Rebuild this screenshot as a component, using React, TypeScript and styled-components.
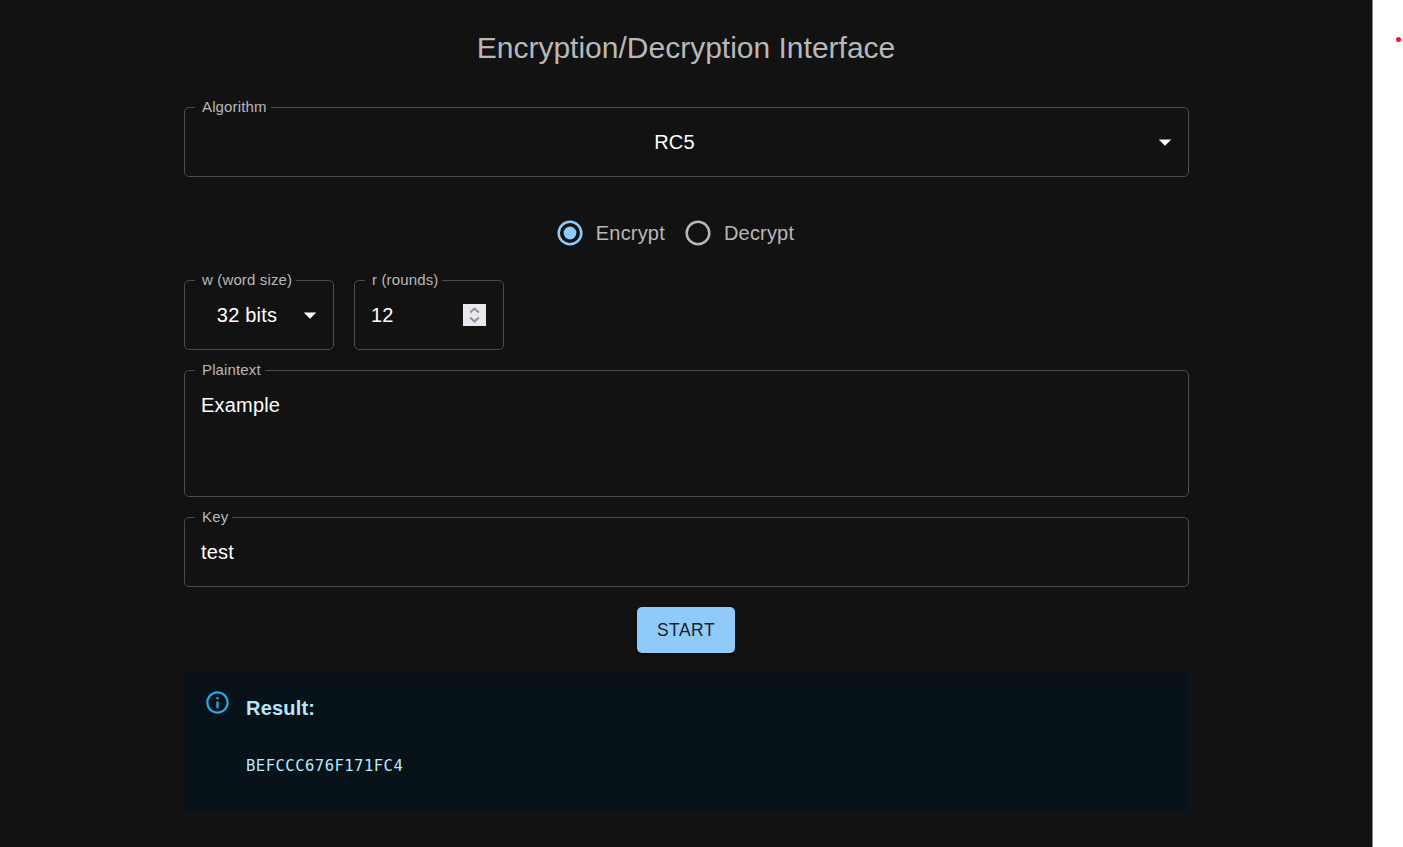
import React from "react";
import styled, { createGlobalStyle } from "styled-components";

const GlobalStyle = createGlobalStyle`
  * { box-sizing: border-box; }
  body {
    margin: 0;
    background: #fff;
    font-family: "Liberation Sans", Arial, sans-serif;
    overflow: hidden;
  }
`;

const Page = styled.div`
  display: flex;
  height: 847px;
`;

const Main = styled.main`
  width: 1373px;
  padding: 29px 183px 0 184px;
  background: #121212;
  border-right: 1px solid #8a8a8a;
`;

const Margin = styled.aside`
  flex: 1;
  display: flex;
  justify-content: flex-end;
  padding: 37px 2px 0 0;
`;

const Dot = styled.span`
  width: 5px;
  height: 5px;
  border-radius: 50%;
  background: #ed1c24;
`;

const Title = styled.h1`
  margin: 0 1px 41px 0;
  font-size: 30px;
  line-height: 37px;
  font-weight: 400;
  text-align: center;
  color: #b8b8b8;
`;

const Field = styled.div<{ $width?: number; $height?: number }>`
  position: relative;
  display: flex;
  align-items: flex-start;
  width: ${(p) => (p.$width ? `${p.$width}px` : "100%")};
  height: ${(p) => p.$height ?? 70}px;
  padding: 19px 17px 0 16px;
  border: 1px solid #4b4b4b;
  border-radius: 5px;
`;

const Label = styled.label`
  position: absolute;
  top: -10px;
  left: 10px;
  padding: 0 4px 0 7px;
  background: #121212;
  color: #b8b8b8;
  font-size: 15px;
  line-height: 18px;
  letter-spacing: 0.14px;
  white-space: nowrap;
`;

const Value = styled.div<{ $center?: boolean }>`
  flex: 1;
  padding-right: ${(p) => (p.$center ? 2 : 0)}px;
  text-align: ${(p) => (p.$center ? "center" : "left")};
  color: #fff;
  font-size: 20px;
  line-height: 31px;
  letter-spacing: 0.19px;
  white-space: nowrap;
`;

const Arrow = styled.svg`
  flex: none;
  width: 30px;
  height: 30px;
  margin-right: -9px;
  fill: #fff;
`;

const Spinner = styled.span`
  display: flex;
  width: 23px;
  height: 22px;
  margin-top: 4px;
  background: #e9e9ed;
`;

const Choices = styled.div`
  display: flex;
  justify-content: center;
  align-items: center;
  gap: 20px;
  height: 52px;
  margin: 30px 22px 21px 0;
`;

const Choice = styled.label`
  display: flex;
  align-items: center;
  gap: 13px;
  color: #b8b8b8;
  font-size: 20px;
  line-height: 30px;
  letter-spacing: 0.19px;
`;

const RadioIcon = styled.svg<{ $checked?: boolean }>`
  width: 26px;
  height: 26px;
  color: ${(p) => (p.$checked ? "#90caf9" : "#b8b8b8")};
`;

const Stack = styled.div`
  display: flex;
  flex-direction: column;
  gap: 20px;
`;

const Row = styled.div`
  display: flex;
  gap: 20px;
`;

const StartButton = styled.button`
  align-self: center;
  width: 98px;
  height: 46px;
  margin-right: 1px;
  padding: 0;
  border: 0;
  border-radius: 5px;
  background: #90caf9;
  color: rgba(0, 0, 0, 0.87);
  font-family: inherit;
  font-size: 17.5px;
  letter-spacing: 0.5px;
  box-shadow: 0 2px 3px rgba(0, 0, 0, 0.4);
`;

const Alert = styled.section`
  display: flex;
  gap: 15px;
  height: 139px;
  padding: 16px 20px;
  border-radius: 5px;
  background: #071318;
  color: #b8e7fb;
`;

const InfoIcon = styled.svg`
  flex: none;
  width: 27px;
  height: 27px;
  fill: #29a9e4;
`;

const ResultTitle = styled.h2`
  margin: 4px 0 0;
  font-size: 20px;
  line-height: 30px;
  letter-spacing: 0.19px;
`;

const ResultText = styled.pre`
  margin: 31px 0 0;
  font-family: "DejaVu Sans Mono", monospace;
  font-size: 15.6px;
  line-height: 25px;
  letter-spacing: 0.44px;
`;

const DropArrow = () => (
  <Arrow viewBox="0 0 24 24">
    <path d="M7 10l5 5 5-5z" />
  </Arrow>
);

const Radio = ({ checked }: { checked?: boolean }) => (
  <RadioIcon $checked={checked} viewBox="0 0 26 26">
    <circle cx="13" cy="13" r="11.3" fill="none" stroke="currentColor" strokeWidth="2.5" />
    {checked && <circle cx="13" cy="13" r="6.4" fill="currentColor" />}
  </RadioIcon>
);

export default function App() {
  return (
    <Page>
      <GlobalStyle />
      <Main>
        <Title>Encryption/Decryption Interface</Title>
        <Field>
          <Label>Algorithm</Label>
          <Value $center>RC5</Value>
          <DropArrow />
        </Field>
        <Choices>
          <Choice>
            <Radio checked />
            Encrypt
          </Choice>
          <Choice>
            <Radio />
            Decrypt
          </Choice>
        </Choices>
        <Stack>
          <Row>
            <Field $width={150}>
              <Label>w (word size)</Label>
              <Value $center>32 bits</Value>
              <DropArrow />
            </Field>
            <Field $width={150}>
              <Label>r (rounds)</Label>
              <Value>12</Value>
              <Spinner>
                <svg width="23" height="22" fill="none" stroke="#8f8f9d" strokeWidth="2">
                  <path d="M7.2 8.6l4.3-4 4.3 4M7.2 13.6l4.3 4 4.3-4" />
                </svg>
              </Spinner>
            </Field>
          </Row>
          <Field $height={127}>
            <Label>Plaintext</Label>
            <Value>Example</Value>
          </Field>
          <Field>
            <Label>Key</Label>
            <Value>test</Value>
          </Field>
          <StartButton>START</StartButton>
          <Alert>
            <InfoIcon viewBox="0 0 24 24">
              <path d="M11 7h2v2h-2zm0 4h2v6h-2zm1-9C6.48 2 2 6.48 2 12s4.48 10 10 10 10-4.48 10-10S17.52 2 12 2zm0 18c-4.41 0-8-3.59-8-8s3.59-8 8-8 8 3.59 8 8-3.59 8-8 8z" />
            </InfoIcon>
            <div>
              <ResultTitle>Result:</ResultTitle>
              <ResultText>BEFCCC676F171FC4</ResultText>
            </div>
          </Alert>
        </Stack>
      </Main>
      <Margin>
        <Dot />
      </Margin>
    </Page>
  );
}
